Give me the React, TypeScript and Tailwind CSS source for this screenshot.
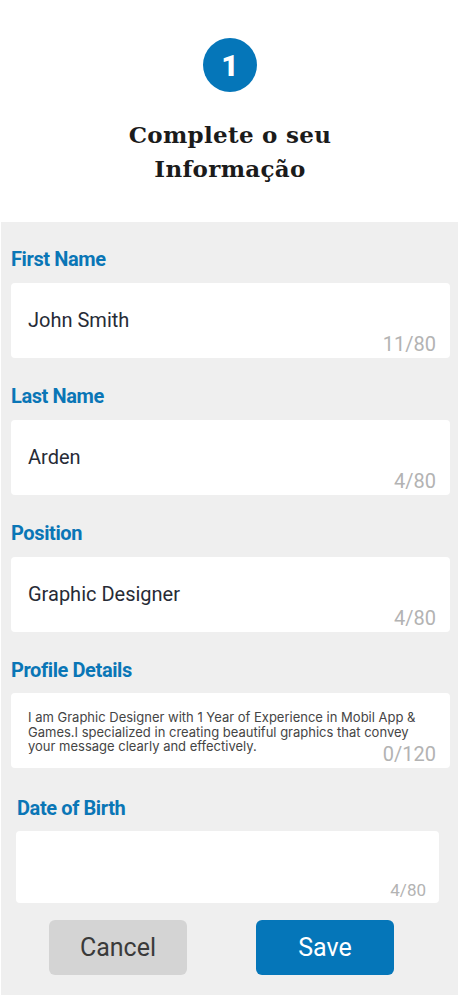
const fields = [
  { label: 'First Name', value: 'John Smith', count: '11/80' },
  { label: 'Last Name', value: 'Arden', count: '4/80' },
  { label: 'Position', value: 'Graphic Designer', count: '4/80' },
];

function Label({ children, className = '' }: { children: string; className?: string }) {
  return (
    <div
      className={`h-6 text-[20px] leading-6 font-bold tracking-[-0.4px] text-[#0a76b6] ${className}`}
      style={{ fontFamily: 'Roboto, sans-serif' }}
    >
      {children}
    </div>
  );
}

export default function App() {
  return (
    <div className="min-h-[997px] w-[460px] bg-white" style={{ fontFamily: 'Roboto, sans-serif' }}>
      <div className="flex flex-col items-center pt-[38px]">
        <div className="grid h-[54px] w-[54px] place-items-center rounded-full bg-[#0576b9] text-[30px] font-black text-white">
          1
        </div>
        <h1
          className="mt-[26px] text-center text-[23px] leading-[34px] font-bold tracking-[0.3px] text-[#1b1b1b]"
          style={{ fontFamily: '"DejaVu Serif", serif' }}
        >
          Complete o seu
          <br />
          Informação
        </h1>
      </div>

      <div className="mx-[1px] mt-[36px] flex w-[457px] flex-col bg-[#efefef] pt-[25px] pr-[8px] pb-[20px] pl-[10px]">
        {fields.map((f, i) => (
          <div key={f.label} className={i > 0 ? 'mt-[26px]' : ''}>
            <Label>{f.label}</Label>
            <div className="mt-3 flex h-[75px] flex-col rounded-[4px] bg-white pr-[14px] pl-[17px]">
              <div className="pt-[24px] text-[20px] leading-[26px] text-[#272b36]">{f.value}</div>
              <div className="mt-auto pb-[3px] text-right text-[20px] leading-[22px] text-[#b3b3b3]">{f.count}</div>
            </div>
          </div>
        ))}

        <div className="mt-[26px]">
          <Label>Profile Details</Label>
          <div className="relative mt-[11px] h-[75px] rounded-[4px] bg-white pr-[14px] pl-[17px]">
            <p
              className="pt-[17px] text-[13px] leading-[14.5px] text-[#454545]"
              style={{ fontFamily: 'Inter, sans-serif' }}
            >
              I am Graphic Designer with 1 Year of Experience in Mobil App &amp;
              <br />
              Games.I specialized in creating beautiful graphics that convey
              <br />
              your message clearly and effectively.
            </p>
            <div className="absolute right-[14px] bottom-[3px] text-[20px] leading-[22px] text-[#b3b3b3]">0/120</div>
          </div>
        </div>

        <div className="mt-[28px] pr-[11px] pl-[5px]">
          <Label className="ml-px">Date of Birth</Label>
          <div className="mt-[11px] flex h-[72px] flex-col rounded-[4px] bg-white pr-[13px]">
            <div className="mt-auto pb-[3px] text-right text-[17px] leading-[20px] text-[#b3b3b3]">4/80</div>
          </div>
        </div>

        <div className="mt-[17px] flex gap-[69px] pl-[38px]">
          <button className="h-[55px] w-[138px] rounded-[6px] bg-[#d4d4d4] text-[25px] text-[#3a3a3a]">Cancel</button>
          <button className="h-[55px] w-[138px] rounded-[6px] bg-[#0576b9] text-[25px] text-white">Save</button>
        </div>
      </div>
    </div>
  );
}
